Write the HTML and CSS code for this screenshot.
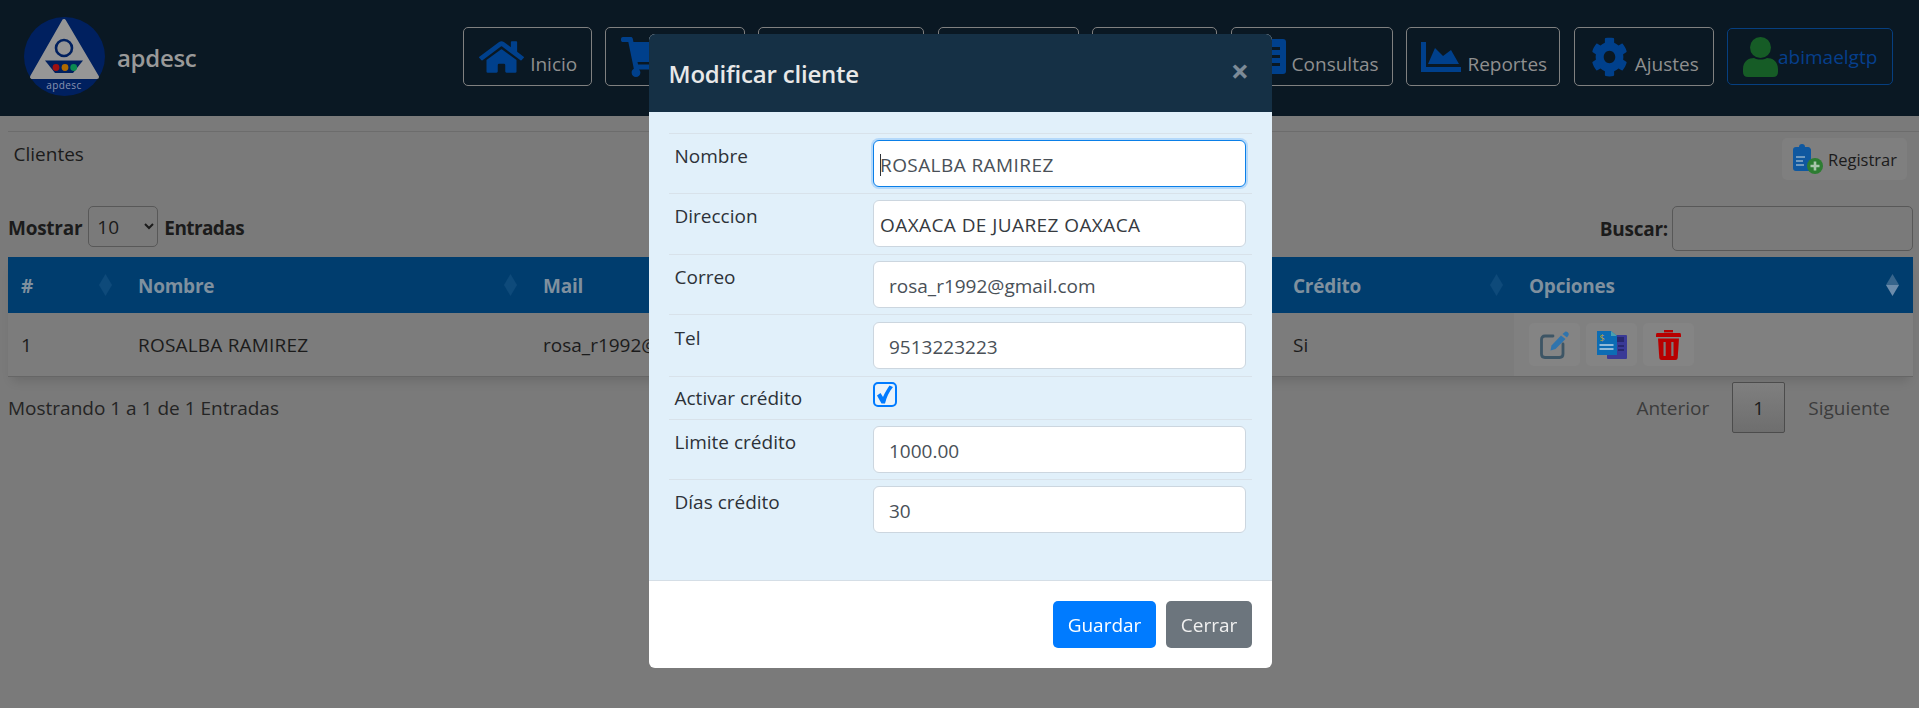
FILE: index.html
```html
<!DOCTYPE html>
<html lang="es">
<head>
<meta charset="utf-8">
<title>Clientes - apdesc</title>
<link rel="stylesheet" href="styles.css">
</head>
<body>
<header class="topbar">
  <a class="brand">
    <svg class="logo" viewBox="0 0 81 79">
      <ellipse cx="40.5" cy="39.5" rx="40.5" ry="39.5" fill="#00205f"/>
      <path d="M40 4 L8 60 H73 Z" fill="#969696" stroke="#969696" stroke-width="4" stroke-linejoin="round"/>
      <circle cx="40" cy="31" r="8" fill="none" stroke="#00205f" stroke-width="2.6"/>
      <path d="M21 43.5 H59 L49 56 H31 Z" fill="#00205f"/>
      <circle cx="32" cy="50.5" r="3.4" fill="#a01010"/>
      <circle cx="41" cy="50.5" r="3.4" fill="#b06a00"/>
      <circle cx="49.7" cy="50.5" r="3.4" fill="#0a8a50"/>
      <text x="40" y="72" text-anchor="middle" class="logo-text">apdesc</text>
    </svg>
    <span class="brand-name">apdesc</span>
  </a>
  <nav class="nav">
    <a class="nav-btn w-inicio">
      <svg class="ico-home" viewBox="0 0 576 512" preserveAspectRatio="none"><path d="M280.37 148.26L96 300.11V464a16 16 0 0 0 16 16l112.06-.29a16 16 0 0 0 15.92-16V368a16 16 0 0 1 16-16h64a16 16 0 0 1 16 16v95.64a16 16 0 0 0 16 16.05L464 480a16 16 0 0 0 16-16V300L295.67 148.26a12.19 12.19 0 0 0-15.3 0zM571.6 251.47L488 182.56V44.05a12 12 0 0 0-12-12h-56a12 12 0 0 0-12 12v72.61L318.47 43a48 48 0 0 0-61 0L4.34 251.47a12 12 0 0 0-1.6 16.9l25.5 31A12 12 0 0 0 45.15 301l235.22-193.74a12.19 12.19 0 0 1 15.3 0L530.9 301a12 12 0 0 0 16.9-1.6l25.5-31a12 12 0 0 0-1.7-16.93z"/></svg>
      <span>Inicio</span>
    </a>
    <a class="nav-btn w-ventas">
      <svg class="ico-cart" viewBox="0 0 576 512" preserveAspectRatio="none"><path d="M528.12 301.319l47.273-208C578.806 78.301 567.391 64 551.99 64H159.208l-9.166-44.81C147.758 8.021 137.93 0 126.529 0H24C10.745 0 0 10.745 0 24v16c0 13.255 10.745 24 24 24h69.883l70.248 343.435C147.325 417.1 136 435.222 136 456c0 30.928 25.072 56 56 56s56-25.072 56-56c0-15.674-6.447-29.835-16.824-40h209.647C430.447 426.165 424 440.326 424 456c0 30.928 25.072 56 56 56s56-25.072 56-56c0-22.172-12.888-41.332-31.579-50.405l5.517-24.276c3.413-15.018-8.002-29.319-23.403-29.319H218.117l-6.545-32h293.145c11.206 0 20.92-7.754 23.403-18.681z"/></svg>
    </a>
    <a class="nav-btn w-a"></a>
    <a class="nav-btn w-b"></a>
    <a class="nav-btn w-c"></a>
    <a class="nav-btn w-consultas">
      <svg class="ico-list" viewBox="0 0 27 35"><rect width="27" height="35" rx="3" fill="#00408c"/><rect x="12" y="8" width="9" height="3" fill="#0a1823"/><rect x="12" y="16" width="9" height="3" fill="#0a1823"/><rect x="12" y="24" width="9" height="3" fill="#0a1823"/></svg>
      <span>Consultas</span>
    </a>
    <a class="nav-btn w-reportes">
      <svg class="ico-chart" viewBox="0 0 40 30"><path d="M0 0H5V25H40V30H0Z"/><path d="M7 22 L14 6 L22 14 L30 8 L38 22 Z"/></svg>
      <span>Reportes</span>
    </a>
    <a class="nav-btn w-ajustes">
      <svg class="ico-cog" viewBox="0 0 512 512" preserveAspectRatio="none"><path d="M487.4 315.7l-42.6-24.6c4.3-23.2 4.3-47 0-70.2l42.6-24.6c4.9-2.8 7.1-8.6 5.5-14-11.1-35.6-30-67.8-54.7-94.6-3.8-4.1-10-5.1-14.8-2.3L380.8 110c-17.9-15.4-38.5-27.3-60.8-35.1V25.8c0-5.6-3.9-10.5-9.4-11.7-36.7-8.2-74.3-7.8-109.2 0-5.5 1.2-9.4 6.1-9.4 11.7V75c-22.2 7.9-42.8 19.8-60.8 35.1L88.7 85.5c-4.9-2.8-11-1.9-14.8 2.3-24.7 26.7-43.6 58.9-54.7 94.6-1.7 5.4.6 11.2 5.5 14L67.3 221c-4.3 23.2-4.3 47 0 70.2l-42.6 24.6c-4.9 2.8-7.1 8.6-5.5 14 11.1 35.6 30 67.8 54.7 94.6 3.8 4.1 10 5.1 14.8 2.3l42.6-24.6c17.9 15.4 38.5 27.3 60.8 35.1v49.2c0 5.6 3.9 10.5 9.4 11.7 36.7 8.2 74.3 7.8 109.2 0 5.5-1.2 9.4-6.1 9.4-11.7v-49.2c22.2-7.9 42.8-19.8 60.8-35.1l42.6 24.6c4.9 2.8 11 1.9 14.8-2.3 24.7-26.7 43.6-58.9 54.7-94.6 1.5-5.5-.7-11.3-5.6-14.1zM256 336c-44.1 0-80-35.9-80-80s35.9-80 80-80 80 35.9 80 80-35.9 80-80 80z"/></svg>
      <span>Ajustes</span>
    </a>
    <a class="nav-user">
      <svg class="ico-user" viewBox="0 0 35 40"><ellipse cx="17.5" cy="10.5" rx="10.5" ry="10.5" fill="#165c26"/><path d="M0 32 C0 24 6 21 11 21 C15 23 20 23 24 21 C29 21 35 24 35 32 V35 Q35 40 30 40 H5 Q0 40 0 35 Z" fill="#165c26"/></svg>
      <span>abimaelgtp</span>
    </a>
  </nav>
</header>

<main class="page">
  <hr class="rule">
  <div class="title-row">
    <span class="page-title">Clientes</span>
    <a class="btn-register">
      <svg class="ico-reg" viewBox="0 0 30 30">
        <path d="M9 0 C11 0 12 1 12 3 H15 C17 3 18 5 18 6 V27 H3 C1 27 0 26 0 24 V6 C0 4 1 3 3 3 H6 C6 1 7 0 9 0Z" fill="#0f58a0"/>
        <rect x="3" y="12" width="9" height="2" fill="#6f9ac0"/><rect x="3" y="16" width="7" height="2" fill="#6f9ac0"/><rect x="3" y="20" width="8" height="2" fill="#6f9ac0"/>
        <circle cx="22" cy="22" r="8" fill="#2d7d32"/>
        <path d="M22 17.5V26.5M17.5 22H26.5" stroke="#a9c6ab" stroke-width="2.6"/>
      </svg>
      <span>Registrar</span>
    </a>
  </div>
  <div class="controls">
    <label class="length"><span class="length-text">Mostrar</span>
      <select class="length-select"><option>10</option><option>25</option><option>50</option></select>
      <span class="length-text length-tail">Entradas</span></label>
    <label class="search">Buscar:<input class="search-input" type="search"></label>
  </div>
  <table class="data">
    <colgroup><col class="c1"><col class="c2"><col class="c3"><col class="c4"><col class="c5"><col class="c6"></colgroup>
    <thead>
      <tr>
        <th>#<i class="sort"></i></th>
        <th>Nombre<i class="sort"></i></th>
        <th>Mail<i class="sort"></i></th>
        <th><i class="sort"></i></th>
        <th>Crédito<i class="sort"></i></th>
        <th>Opciones<i class="sort sort-active"></i></th>
      </tr>
    </thead>
    <tbody>
      <tr>
        <td>1</td>
        <td class="caps">ROSALBA RAMIREZ</td>
        <td>rosa_r1992@</td>
        <td></td>
        <td>Si</td>
        <td class="opts">
          <div class="opt-list">
            <a class="opt-btn"><svg class="ico-edit" viewBox="0 0 29 28"><path d="M13 5 H5 Q1.5 5 1.5 8.5 V23 Q1.5 26.5 5 26.5 H19.5 Q23 26.5 23 23 V13" fill="none" stroke="#3d5565" stroke-width="2.8" stroke-linecap="round"/><path d="M25.5 0.5 C27.5 0.5 29 2 28.7 4 L27 6.5 L22.5 3 Z" fill="#2f74ad"/><path d="M21 4.5 L25.5 8 L15.5 18 L10.5 19.5 L11.5 14.5 Z" fill="#2f74ad"/></svg></a>
            <a class="opt-btn"><svg class="ico-docs" viewBox="0 0 30 28"><rect x="10" y="4" width="20" height="24" rx="1" fill="#3a3a96"/><rect x="20" y="6" width="7" height="5" fill="#28286e"/><rect x="21" y="14" width="6" height="2" fill="#28286e"/><rect x="21" y="18" width="6" height="2" fill="#28286e"/><path d="M0 0H14L20 5V24H0Z" fill="#0c6cb4"/><path d="M14 0L20 5H14Z" fill="#4aa0b0"/><rect x="2.5" y="13" width="14" height="2" fill="#8fbad8"/><rect x="2.5" y="17" width="14" height="2" fill="#8fbad8"/><text x="2.5" y="10" class="doc-dollar">$</text></svg></a>
            <a class="opt-btn"><svg class="ico-trash" viewBox="0 0 25 30"><rect x="8" y="0" width="9" height="2.4" fill="#b80000"/><path d="M1 3H24Q25 3 25 5V7H0V5Q0 3 1 3Z" fill="#b80000"/><path d="M2 8.5H23L21.7 28Q21.5 30 19.5 30H5.5Q3.5 30 3.3 28Z" fill="#b80000"/><rect x="7.5" y="12" width="2.2" height="14" fill="#7c7c7c"/><rect x="15.3" y="12" width="2.2" height="14" fill="#7c7c7c"/></svg></a>
          </div>
        </td>
      </tr>
    </tbody>
  </table>
  <div class="table-foot">
    <span class="info">Mostrando 1 a 1 de 1 Entradas</span>
    <div class="pager">
      <a class="page-link">Anterior</a>
      <a class="page-link page-current">1</a>
      <a class="page-link">Siguiente</a>
    </div>
  </div>
</main>

<div class="overlay">
  <section class="modal">
    <div class="modal-head">
      <h5 class="modal-title">Modificar cliente</h5>
      <span class="modal-close">×</span>
    </div>
    <div class="modal-body">
      <div class="frow">
        <span class="flabel">Nombre</span>
        <div class="caret-wrap"><input class="finput finput-focus finput-tight finput-caps" type="text" value="ROSALBA RAMIREZ"><i class="caret"></i></div>
      </div>
      <div class="frow frow-b">
        <span class="flabel">Direccion</span>
        <input class="finput finput-tight finput-dark finput-caps" type="text" value="OAXACA DE JUAREZ OAXACA">
      </div>
      <div class="frow frow-c">
        <span class="flabel">Correo</span>
        <input class="finput" type="text" value="rosa_r1992@gmail.com">
      </div>
      <div class="frow frow-d">
        <span class="flabel">Tel</span>
        <input class="finput" type="text" value="9513223223">
      </div>
      <div class="frow frow-e">
        <span class="flabel">Activar crédito</span>
        <span class="fcheck"><svg viewBox="0 0 20 21"><path d="M2 11.5 L5.5 9 L8 13 C10 8.5 12 5 14.5 1.5 L18 3 C14 8 11.5 13 10 19.5 L6.5 19.5 Z" fill="#007bff"/></svg></span>
      </div>
      <div class="frow frow-c">
        <span class="flabel">Limite crédito</span>
        <input class="finput" type="text" value="1000.00">
      </div>
      <div class="frow frow-f">
        <span class="flabel">Días crédito</span>
        <input class="finput" type="text" value="30">
      </div>
    </div>
    <div class="modal-foot">
      <button class="mbtn mbtn-primary" type="button">Guardar</button>
      <button class="mbtn mbtn-secondary" type="button">Cerrar</button>
    </div>
  </section>
</div>
</body>
</html>
```

FILE: styles.css
```css
* { box-sizing: border-box; }
html, body { margin: 0; height: 100%; }
body {
  background: #7a7a7a;
  color: #1b1b1b;
  font-family: "Open Sans", "Liberation Sans", sans-serif;
  font-size: 19px;
  overflow: hidden;
}
.topbar {
  height: 116px;
  background: #0a1823;
  display: flex;
  align-items: center;
  padding: 0 26px 3px 24px;
}
.brand { display: flex; align-items: center; gap: 12px; }
.logo { width: 81px; height: 79px; display: block; }
.logo-text { font-size: 10px; fill: #8a93b0; letter-spacing: 0.4px; }
.brand-name { color: #999; font-size: 24px; font-weight: 600; letter-spacing: -0.3px; padding-top: 2px; }
.nav { margin-left: auto; display: flex; align-items: center; gap: 13.3px; }
.nav-btn {
  height: 59px;
  border: 1px solid #808080;
  border-radius: 5px;
  display: flex;
  align-items: center;
  gap: 6px;
  padding-left: 15px;
  color: #8f8f8f;
  fill: #00408c;
  white-space: nowrap;
  overflow: hidden;
}
.nav-btn span { padding-top: 15px; }
.w-inicio { width: 128.5px; }
.w-ventas { width: 140px; }
.w-a { width: 166px; }
.w-b { width: 141px; }
.w-c { width: 125.5px; }
.w-consultas { width: 162.5px; padding-left: 27px; }
.w-reportes { width: 154px; padding-left: 14px; }
.w-ajustes { width: 140px; padding-left: 16px; gap: 7px; }
.ico-home { width: 45px; height: 36px; }
.ico-cart { width: 45px; height: 40px; }
.ico-list { width: 27px; height: 35px; }
.ico-chart { width: 40px; height: 30px; }
.ico-cog { width: 37px; height: 40px; }
.nav-user {
  width: 166px;
  height: 57px;
  border: 1px solid #063f80;
  border-radius: 5px;
  display: flex;
  align-items: center;
  padding-left: 15px;
  color: #063f8c;
}
.ico-user { width: 35px; height: 40px; flex: none; }
.page { padding-left: 8px; }
.rule { margin: 15px 0 0; border: 0; border-top: 1px solid #6c6c6c; }
.title-row {
  display: flex;
  justify-content: space-between;
  padding: 6px 12px 0 5.5px;
}
.page-title { line-height: 32px; }
.btn-register {
  width: 125px;
  height: 42px;
  background: #7f7f7f;
  border-radius: 5px;
  display: flex;
  align-items: center;
  gap: 5px;
  padding-left: 11px;
  font-size: 16.5px;
}
.ico-reg { width: 30px; height: 30px; flex: none; }
.controls {
  display: flex;
  justify-content: space-between;
  margin: 26px 6px 0 0;
  font-weight: 700;
  letter-spacing: -0.25px;
}
.length { display: flex; align-items: center; gap: 6px; height: 41px; }
.length-text { padding-top: 2px; }
.length-tail { letter-spacing: -0.6px; }
.length-select {
  width: 70px;
  height: 41px;
  background: transparent;
  border: 1px solid #585858;
  border-radius: 5px;
  padding-left: 4px;
  font: inherit;
  font-weight: 400;
  color: #1b1b1b;
}
.search { display: flex; align-items: center; gap: 4px; height: 45px; }
.search-input {
  width: 241px;
  height: 45px;
  background: transparent;
  border: 1px solid #585858;
  border-radius: 5px;
}
.data {
  table-layout: fixed;
  border-collapse: separate;
  border-spacing: 0;
  width: 1905px;
  margin-top: 6px;
  box-shadow: 0 8px 10px -4px rgba(0,0,0,.12);
}
.c1 { width: 115px; }
.c2 { width: 405px; }
.c3 { width: 376px; }
.c4 { width: 374px; }
.c5 { width: 236px; }
.c6 { width: 399px; }
.data th {
  height: 56px;
  background: #003d6e;
  color: #7f909e;
  font-weight: 700;
  letter-spacing: -0.25px;
  text-align: left;
  padding: 2px 15px 0;
  position: relative;
}
.data th:first-child, .data td:first-child { padding-left: 13px; }
.sort {
  position: absolute;
  right: 11px;
  top: 17px;
  width: 13px;
  height: 22px;
  background: #0e4a7a;
  clip-path: polygon(50% 0, 100% 50%, 50% 100%, 0 50%);
}
.sort-active { right: 14px; background: linear-gradient(#37658c 50%, #6c8cab 50%); }
.data td {
  height: 64px;
  background: #7c7c7c;
  padding: 0 15px;
  border-bottom: 1px solid #666;
  white-space: nowrap;
}
.data td.caps { letter-spacing: 0.2px; }
.data td.opts { background: #808080; }
.opt-list { display: flex; gap: 6px; }
.opt-btn {
  width: 51px;
  height: 43px;
  background: #848484;
  border-radius: 5px;
  display: flex;
  align-items: center;
  justify-content: center;
}
.ico-edit { width: 29px; height: 28px; }
.ico-docs { width: 30px; height: 28px; }
.ico-trash { width: 25px; height: 30px; }
.doc-dollar { font-size: 9px; fill: #b8a040; }
.table-foot {
  display: flex;
  justify-content: space-between;
  align-items: center;
  margin: 5px 6px 0 0;
  height: 51px;
}
.info { color: #242424; padding-top: 1px; }
.pager { display: flex; align-items: center; }
.page-link { padding: 0 23px; color: #3c3c3c; line-height: 53px; height: 51px; }
.page-current {
  height: 51px;
  width: 53px;
  padding: 0;
  text-align: center;
  line-height: 50px;
  color: #1b1b1b;
  border: 1px solid #4c4c4c;
  border-radius: 2px;
  background: linear-gradient(#7f7f7f, #6e6e6e);
}
.overlay {
  position: fixed;
  inset: 0;
  display: flex;
  justify-content: center;
  align-items: flex-start;
  padding: 34px 0 0 2px;
}
.modal {
  width: 623px;
  height: 634px;
  background: #fff;
  border-radius: 6px;
  overflow: hidden;
  color: #212529;
  display: flex;
  flex-direction: column;
}
.modal-head {
  height: 78px;
  background: #153045;
  display: flex;
  align-items: center;
  justify-content: space-between;
  padding: 0 23px 0 19.5px;
  flex: none;
}
.modal-title { margin: 0; color: #e8e8e8; font-size: 24px; font-weight: 600; letter-spacing: -0.2px; }
.modal-close { color: #7c8a97; font-size: 32px; font-weight: 700; line-height: 1; margin-bottom: 4px; }
.modal-body {
  height: 469px;
  background: #e1f0fa;
  padding: 21px 20px 0;
  border-bottom: 1px solid #d5dee6;
  flex: none;
}
.frow {
  display: grid;
  grid-template-columns: 204px 373px;
  height: 60px;
  padding-top: 6px;
  border-top: 1px solid #d8e2ea;
}
.frow-b { height: 61px; }
.frow-d { height: 62px; padding-top: 7px; }
.frow-e { height: 43px; padding-top: 5px; }
.frow-f { height: auto; }
.flabel { padding-left: 5.5px; padding-top: 1px; line-height: 30px; color: #2d3238; }
.finput {
  width: 373px;
  height: 47px;
  background: #fff;
  border: 1px solid #ccd6df;
  border-radius: 6px;
  font: inherit;
  color: #495057;
  padding: 3px 15px 0;
  outline: none;
}
.finput-tight { padding-left: 6px; }
.finput-caps { letter-spacing: 0.42px; }
.finput-dark { color: #363a3f; }
.finput-focus { border-color: #0a7fe8; box-shadow: 0 0 0 2px rgba(0,123,255,.2); }
.caret-wrap { position: relative; height: 47px; }
.caret {
  position: absolute;
  left: 7px;
  top: 14px;
  width: 1px;
  height: 22px;
  background: #2d3238;
}
.fcheck {
  width: 24px;
  height: 25px;
  border: 2px solid #007bff;
  border-radius: 5px;
  background: #e9f3fb;
  display: block;
}
.fcheck svg { display: block; width: 20px; height: 21px; }
.modal-foot {
  flex: 1;
  display: flex;
  justify-content: flex-end;
  gap: 10px;
  padding: 20px 20px 0 0;
}
.mbtn {
  height: 47px;
  border: 0;
  border-radius: 5px;
  color: #fff;
  font: inherit;
}
.mbtn-primary { width: 103px; background: #007bff; }
.mbtn-secondary { width: 86px; background: #6c757d; color: #f0f0f0; }
```
